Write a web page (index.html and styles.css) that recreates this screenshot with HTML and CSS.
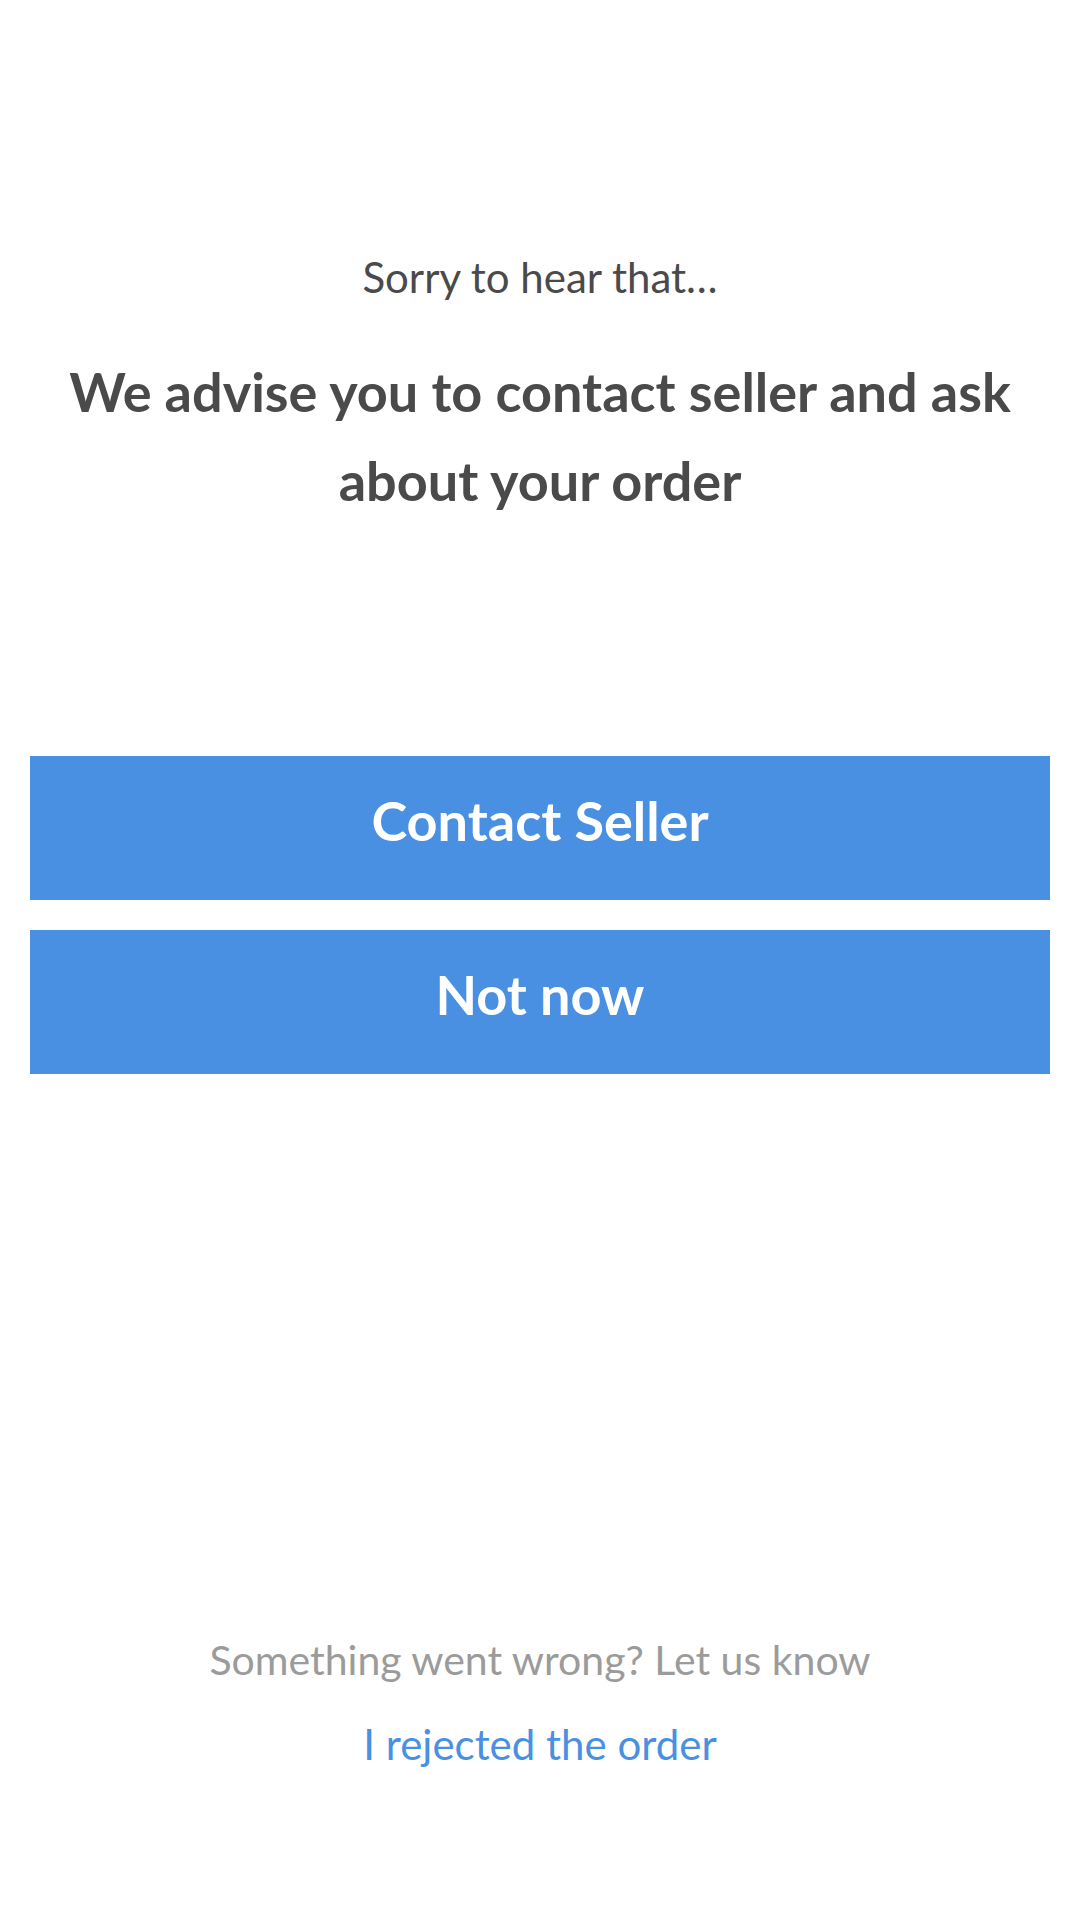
FILE: index.html
```html
<!DOCTYPE html>
<html>
<head>
<meta charset="utf-8">
<link rel="stylesheet" href="styles.css">
</head>
<body>
<div class="page">
  <div class="top">
    <p class="sorry">Sorry to hear that…</p>
    <h1 class="advice">We advise you to contact seller and ask about your order</h1>
  </div>
  <div class="actions">
    <button class="btn">Contact Seller</button>
    <button class="btn">Not now</button>
  </div>
  <div class="footer">
    <p class="hint">Something went wrong? Let us know</p>
    <a class="link" href="#">I rejected the order</a>
  </div>
</div>
</body>
</html>
```
FILE: styles.css
```css
html, body {
  margin: 0;
  padding: 0;
  background: #ffffff;
}
.page {
  width: 1080px;
  height: 1920px;
  font-family: Lato, "Open Sans", sans-serif;
  display: flex;
  flex-direction: column;
}
.top {
  padding: 250px 30px 0;
  text-align: center;
}
.sorry {
  margin: 0;
  font-size: 42px;
  line-height: 54px;
  color: #4a4a4a;
}
.advice {
  margin: 43px 0 0;
  font-size: 54px;
  line-height: 89px;
  font-weight: 700;
  color: #4a4a4a;
}
.actions {
  margin-top: 231px;
  padding: 0 30px;
  display: flex;
  flex-direction: column;
  gap: 30px;
}
.btn {
  height: 144px;
  border: none;
  background: #4a90e2;
  color: #ffffff;
  font-family: Lato, "Open Sans", sans-serif;
  font-size: 54px;
  font-weight: 700;
  padding: 0 0 16px;
}
.footer {
  margin-top: auto;
  padding-bottom: 149px;
  display: flex;
  flex-direction: column;
  align-items: center;
  gap: 30px;
}
.hint {
  margin: 0;
  font-size: 41px;
  line-height: 54px;
  color: #9b9b9b;
}
.link {
  font-size: 42px;
  line-height: 54px;
  color: #4a90e2;
  text-decoration: none;
}
```
